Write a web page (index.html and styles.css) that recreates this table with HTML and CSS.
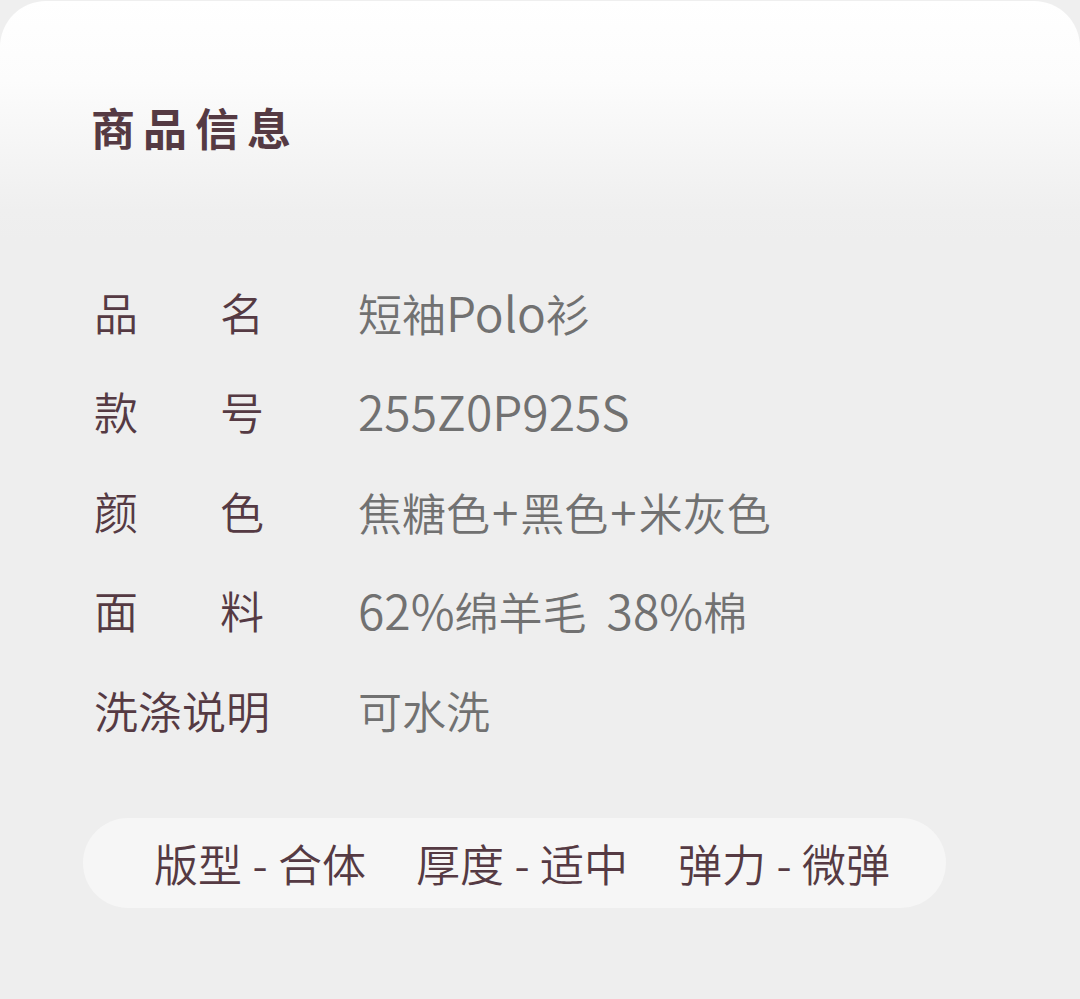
FILE: index.html
```html
<!DOCTYPE html>
<html lang="zh-CN">
<head>
<meta charset="utf-8">
<link rel="stylesheet" href="styles.css">
</head>
<body>
<div class="card">
  <h1 class="title">商品信息</h1>
  <dl class="specs">
    <div class="row"><dt class="label">品名</dt><dd class="value">短袖<span class="lat">Polo</span>衫</dd></div>
    <div class="row"><dt class="label">款号</dt><dd class="value"><span class="lat">255Z0P925S</span></dd></div>
    <div class="row"><dt class="label">颜色</dt><dd class="value">焦糖色<span class="lat plus">+</span>黑色<span class="lat plus">+</span>米灰色</dd></div>
    <div class="row"><dt class="label">面料</dt><dd class="value"><span class="lat">62%</span>绵羊毛<span class="gap"></span><span class="lat">38%</span>棉</dd></div>
    <div class="row"><dt class="label">洗涤说明</dt><dd class="value">可水洗</dd></div>
  </dl>
  <div class="pill">
    <span class="attr">版型<span class="dash">-</span>合体</span>
    <span class="attr">厚度<span class="dash">-</span>适中</span>
    <span class="attr">弹力<span class="dash">-</span>微弹</span>
  </div>
</div>
</body>
</html>
```

FILE: styles.css
```css
html, body {
  margin: 0;
  padding: 0;
  background: #efefef;
}
body {
  font-family: "Noto Sans CJK SC", "Noto Sans", sans-serif;
  width: 1080px;
  height: 999px;
  overflow: hidden;
}
.card {
  margin-top: 1px;
  height: 998px;
  border-radius: 46px 46px 0 0;
  background: linear-gradient(to bottom, #ffffff 0px, #fcfcfc 80px, #f5f5f5 150px, #efefef 210px, #eeeeee 240px, #eeeeee 100%);
  box-sizing: border-box;
  overflow: hidden;
}
.title {
  margin: 0;
  padding: 99px 0 0 91px;
  font-size: 44px;
  line-height: 54px;
  font-weight: 700;
  letter-spacing: 8px;
  color: #553a43;
}
.specs {
  margin: 108px 0 0 0;
  padding: 0 0 0 94px;
}
.row {
  display: flex;
  align-items: center;
  height: 99.5px;
}
.label {
  width: 170px;
  flex: none;
  font-size: 44px;
  line-height: 56px;
  font-weight: 350;
  color: #553a43;
  text-align: justify;
  text-align-last: justify;
  margin: 0;
  white-space: nowrap;
}
.value {
  margin: 0 0 0 94px;
  font-size: 44px;
  line-height: 56px;
  font-weight: 350;
  color: #717171;
  white-space: nowrap;
}
.lat {
  font-size: 48px;
}
.plus {
  margin: 0 2px;
}
.gap {
  display: inline-block;
  width: 20px;
}
.pill {
  margin: 58px 0 0 83px;
  width: 863px;
  height: 90px;
  border-radius: 45px;
  background: #f6f6f6;
  display: flex;
  align-items: center;
  gap: 50px;
  padding-left: 71px;
  box-sizing: border-box;
}
.attr {
  font-size: 44px;
  line-height: 56px;
  font-weight: 350;
  color: #553a43;
  white-space: nowrap;
  display: flex;
  align-items: center;
}
.dash {
  display: inline-block;
  width: 36px;
  text-align: center;
}
```
